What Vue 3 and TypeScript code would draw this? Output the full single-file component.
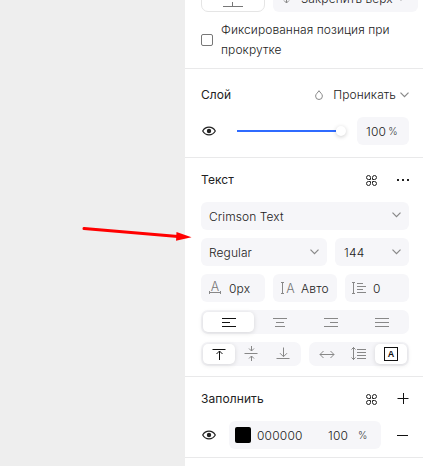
<script setup lang="ts">
import { ref } from 'vue'

const opacity = ref(100)
const fontFamily = ref('Crimson Text')
const fontStyle = ref('Regular')
const fontSize = ref(144)
const fill = ref('000000')
const horizontal = ref(0)
const petals = 'M4.5 4.5h-2a2 2 0 1 1 2-2ZM6.5 4.5v-2a2 2 0 1 1 2 2ZM4.5 6.5v2a2 2 0 1 1-2-2ZM6.5 6.5h2a2 2 0 1 1-2 2Z'
const alignments = [
  'M0 .5h14M0 4.5h8M0 8.5h14',
  'M0 .5h14M3 4.5h8M2 8.5h10',
  'M0 .5h14M6 4.5h8M0 8.5h14',
  'M0 .5h14M0 4.5h14M0 8.5h14',
]
</script>

<template>
  <div class="editor">
    <svg class="pointer" width="110" height="17" viewBox="0 0 110 17">
      <path d="M2 3.6 96 11.4" stroke="#f00" stroke-width="3" stroke-linecap="round" />
      <path d="M94.500 7 109.500 12.300 94 15.800Z" fill="#f00" />
    </svg>
    <aside class="panel">
      <section class="position">
        <div class="pins">
          <div class="pin"><svg width="20" height="7"><path d="M0 6.500h20M9.500 2v4" stroke="#777" /></svg></div>
          <div class="field pin-select">
            <svg width="7" height="12"><path d="M3.500 0v11M1 8.500l2.500 2.500L6 8.500" stroke="#888" fill="none" /></svg>
            <span>Закрепить верх</span>
            <svg class="chev" width="8" height="5"><path d="m.5.5 3.500 3.500L7.500 .5" /></svg>
          </div>
        </div>
        <label class="fixed"><i class="check"></i><span>Фиксированная позиция при прокрутке</span></label>
      </section>

      <section class="layer">
        <header>
          <h2>Слой</h2>
          <div class="blend">
            <svg width="8" height="10" viewBox="0 0 8 10"><path d="M4 .7C3 2.500 .6 4 .6 6.100a3.400 3.400 0 0 0 6.800 0C7.400 4 5 2.500 4 .7Z" stroke="#888" fill="none" /></svg>
            <span>Проникать</span>
            <svg class="chev" width="9" height="6"><path d="m.5.7 4 4 4-4" /></svg>
          </div>
        </header>
        <div class="opacity-row">
          <svg class="eye" width="14" height="10" viewBox="0 0 14 10"><path d="M.7 5C3.500-.1 10.500-.1 13.300 5 10.500 10.100 3.500 10.100 .7 5Z" /><circle cx="7" cy="5" r="2.200" /></svg>
          <div class="slider"><i class="track"></i><i class="knob"></i></div>
          <div class="field percent"><span>{{ opacity }}</span><small>%</small></div>
        </div>
      </section>

      <section class="text">
        <header>
          <h2>Текст</h2>
          <div class="tools">
            <svg class="styles" width="11" height="11" viewBox="0 0 11 11"><path :d="petals" /></svg>
            <svg width="12" height="12"><path d="M0 5h2v2H0zM5 5h2v2H5zM10 5h2v2h-2z" fill="#222" /></svg>
          </div>
        </header>
        <div class="field select family"><span>{{ fontFamily }}</span><svg class="chev" width="9" height="6"><path d="m.5.7 4 4 4-4" /></svg></div>
        <div class="type-row">
          <div class="field select"><span>{{ fontStyle }}</span><svg class="chev" width="9" height="6"><path d="m.5.7 4 4 4-4" /></svg></div>
          <div class="field select size"><span>{{ fontSize }}</span><svg class="chev" width="9" height="6"><path d="m.5.7 4 4 4-4" /></svg></div>
        </div>
        <div class="metrics">
          <div class="field metric">
            <svg class="ico" width="12" height="14"><text x="6" y="10" font-size="12.500" text-anchor="middle">A</text><path d="M.5 10v3M11.500 10v3M1 11.500h10" /></svg><span>0px</span>
          </div>
          <div class="field metric leading">
            <svg class="ico" width="14" height="14"><path d="M0 1.500h3M1.500 2v10M0 12.500h3" /><text x="9.500" y="12" font-size="12.500" text-anchor="middle">A</text></svg><span>Авто</span>
          </div>
          <div class="field metric paragraph">
            <svg class="ico" width="14" height="14"><path d="M0 1.500h3M1.500 2v10M0 12.500h3M5 2.500h6M5 5.500h9M5 8.500h6M5 11.500h9" /></svg><span>0</span>
          </div>
        </div>
        <div class="segments aligns">
          <button v-for="(path, i) in alignments" :key="path" :class="{ active: i === horizontal }">
            <svg class="ico" width="14" height="9"><path :d="path" /></svg>
          </button>
        </div>
        <div class="type-groups">
          <div class="segments three">
            <button class="active"><svg class="ico" width="14" height="16"><path d="M.5 3.500h13M7.500 14V5M4.500 8l3-3 3 3" /></svg></button>
            <button><svg class="ico" width="14" height="16"><path d="M.5 7.500h13M7.500 0v5M5 2.500 7.500 5 10 2.500M7.500 15v-5M5 12.500 7.500 10l2.500 2.500" /></svg></button>
            <button><svg class="ico" width="14" height="16"><path d="M.5 12.500h13M7.500 1.500v9M4 7.200l3.500 3.500L11 7.200" /></svg></button>
          </div>
          <div class="segments three">
            <button><svg class="ico" width="16" height="16"><path d="M1 8.500h14M4.500 5 1 8.500 4.500 12M11.500 5 15 8.500 11.500 12" /></svg></button>
            <button><svg class="ico" width="16" height="16"><path d="M2.500 1v13M.5 3.500l2-2 2 2M.5 11.500l2 2 2-2M6 3.500h9M6 6.500h9M6 9.500h9M6 12.500h9" /></svg></button>
            <button class="active"><svg class="ico boxed" width="14" height="14"><rect x=".5" y=".5" width="13" height="13" /><text x="7" y="10" font-size="9" text-anchor="middle">A</text></svg></button>
          </div>
        </div>
      </section>

      <section class="fill">
        <header>
          <h2>Заполнить</h2>
          <div class="tools">
            <svg class="styles" width="11" height="11" viewBox="0 0 11 11"><path :d="petals" /></svg>
            <svg class="plus" width="12" height="12"><path d="M.5 5.500h11M6.500 0v11" /></svg>
          </div>
        </header>
        <div class="fill-row">
          <svg class="eye" width="14" height="10" viewBox="0 0 14 10"><path d="M.7 5C3.500-.1 10.500-.1 13.300 5 10.500 10.100 3.500 10.100 .7 5Z" /><circle cx="7" cy="5" r="2.200" /></svg>
          <div class="field color"><i class="swatch"></i><span class="hex">{{ fill }}</span><span class="alpha">100</span><small>%</small></div>
          <i class="minus"></i>
        </div>
      </section>
    </aside>
  </div>
</template>

<style>
body { margin: 0; overflow: hidden; }
</style>

<style scoped>
* { box-sizing: border-box; }
.editor { position: relative; width: 423px; height: 466px; overflow: hidden; background: #eee; font: 300 12px/20px Inter, sans-serif; letter-spacing: .08px; color: #222; }
.panel { width: 238px; height: 466px; margin-left: 185px; background: #fff; }
.pointer { position: absolute; left: 82px; top: 225px; fill: none; }
section { border-bottom: 1px solid #e9e9ea; padding: 0 14px 0 16px; }
svg { display: block; flex: none; overflow: visible; }
header { display: flex; align-items: center; justify-content: space-between; height: 20px; }
h2 { margin: 0; font-size: 12px; font-weight: 400; line-height: 20px; color: #222; letter-spacing: .08px; }
.field { display: flex; align-items: center; height: 28px; border-radius: 6px; background: #f6f6f9; }
.field span { padding-top: 2px; }
.chev { fill: none; stroke: #888; stroke-width: 1.2; }
.position { height: 69px; padding-right: 5px; }
.pins { display: flex; gap: 8px; height: 12px; align-items: flex-end; }
.pin { display: flex; justify-content: center; align-items: flex-end; flex: none; width: 64px; height: 28px; padding-bottom: 4px; border: 1px solid #e5e5e5; border-radius: 7px; }
.pin-select { width: 145px; flex: none; padding: 0 13px 0 10px; }
.pin-select span { margin-left: 11px; margin-right: auto; white-space: nowrap; }
.fixed { display: flex; align-items: center; gap: 8px; margin-top: 8px; }
.check { flex: none; width: 12px; height: 12px; border: 1px solid #777; border-radius: 2px; }
.layer { height: 89px; padding-top: 16px; }
.blend { display: flex; align-items: center; }
.blend span { margin: 0 4px 0 10px; }
.opacity-row, .fill-row { display: flex; align-items: center; height: 28px; padding-left: 1px; }
.opacity-row { margin-top: 12px; }
.eye { fill: none; stroke: #222; stroke-width: 1.2; }
.eye circle { fill: #222; stroke: none; }
.slider { display: flex; align-items: center; width: 109px; margin-left: 21px; }
.track { width: 99px; height: 2px; background: #2f6bff; }
.knob { width: 10px; height: 10px; border-radius: 50%; background: #fff; box-shadow: 0 1px 4px #0003; }
.percent { width: 52px; margin-left: 11px; padding-left: 9px; }
small { font-size: 10px; letter-spacing: 0; color: #333; }
.percent small { margin-left: 2px; }
.hex, .alpha, .percent span, .size span, .metric span { letter-spacing: .2px; }
.text { height: 219px; padding-top: 12px; }
.tools { display: flex; align-items: center; gap: 20px; }
.styles { fill: none; stroke: #222; stroke-width: 1; margin-top: 1px; }
.text header { margin-bottom: 12px; }
.select { justify-content: space-between; padding: 0 8px; }
.family .chev { margin-bottom: 2px; }
.type-row { display: grid; grid-template-columns: 126px 74px; gap: 8px; margin-top: 8px; }
.size { padding-left: 9px; }
.metrics { display: grid; grid-template-columns: repeat(3, 64px); gap: 8px; margin: 8px 0; }
.metric { padding-left: 8px; gap: 8px; }
.leading { gap: 6px; }
.paragraph { padding-left: 7px; gap: 7px; }
.ico { fill: none; stroke: #888; stroke-width: 1; }
.ico text { stroke: none; fill: #777; letter-spacing: 0; font-weight: 300; }
.segments { display: grid; height: 24px; padding: 2px; border-radius: 7px; background: #f6f6f9; }
.aligns { grid-template-columns: repeat(4, 1fr); }
.three { grid-template-columns: repeat(3, 32px); }
button { display: grid; place-items: center; padding: 0; border: 0; border-radius: 5px; background: transparent; }
button.active { background: #fff; box-shadow: 0 1px 5px #0002; }
.active .ico { stroke: #111; }
.active .ico text { fill: #111; font-weight: 600; }
.type-groups { display: grid; grid-template-columns: 100px 100px; gap: 8px; margin-top: 8px; }
.fill { height: 81px; padding-top: 12px; }
.fill-row { margin-top: 12px; }
.plus { stroke: #111; }
.color { width: 152px; margin-left: 13px; padding-left: 6px; }
.swatch { width: 16px; height: 16px; border-radius: 2px; background: #000; }
.hex { width: 71px; margin-left: 6px; }
.alpha { width: 30px; }
.minus { width: 11px; height: 1px; margin-left: 16px; background: #111; }
</style>
